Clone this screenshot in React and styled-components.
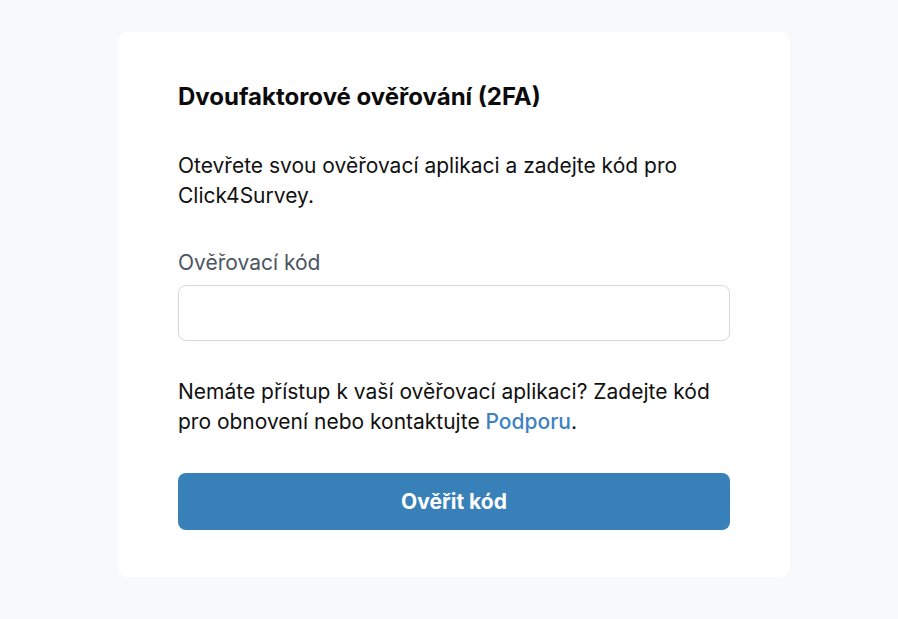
import React from "react";
import styled, { createGlobalStyle } from "styled-components";

const Global = createGlobalStyle`
  html, body { margin: 0; padding: 0; background: #f8f9fb; }
  body { font-family: Inter, "Noto Sans", sans-serif; color: #111; }
  * { box-sizing: border-box; }
`;

const Page = styled.div`
  min-height: 619px;
  display: flex;
  justify-content: center;
  align-items: flex-start;
  padding: 32px 0 0 10px;
`;

const Card = styled.div`
  width: 672px;
  background: #fff;
  border-radius: 10px;
  padding: 50px 60px 47px;
  display: flex;
  flex-direction: column;
`;

const Title = styled.h1`
  margin: 0;
  font-size: 24px;
  line-height: 30px;
  font-weight: 700;
  color: #0b0b0b;
`;

const Text = styled.p`
  margin: ${(p) => p.$mt || 0}px 0 0;
  font-size: 21px;
  line-height: 30px;
  color: #111;
`;

const Link = styled.a`
  color: #3d82c0;
  text-decoration: none;
  font-weight: 500;
`;

const Label = styled.label`
  display: block;
  margin-top: 37px;
  font-size: 21px;
  line-height: 30px;
  color: #4b5563;
`;

const Input = styled.input`
  margin-top: 7px;
  width: 100%;
  height: 56px;
  border: 1px solid #d5d8de;
  border-radius: 8px;
  font-size: 18px;
  padding: 0 16px;
  outline: none;
`;

const Button = styled.button`
  margin-top: 36px;
  width: 100%;
  height: 57px;
  border: none;
  border-radius: 8px;
  background: #3780b8;
  color: #fff;
  font-family: Inter, sans-serif;
  font-size: 21px;
  font-weight: 700;
  cursor: pointer;
`;

export default function App() {
  return (
    <>
      <Global />
      <Page>
        <Card>
          <Title>Dvoufaktorové ověřování (2FA)</Title>
          <Text $mt={39}>
            Otevřete svou ověřovací aplikaci a zadejte kód pro Click4Survey.
          </Text>
          <Label htmlFor="code">Ověřovací kód</Label>
          <Input id="code" type="text" />
          <Text $mt={36}>
            Nemáte přístup k vaší ověřovací aplikaci? Zadejte kód pro obnovení
            nebo kontaktujte <Link href="#">Podporu</Link>.
          </Text>
          <Button>Ověřit kód</Button>
        </Card>
      </Page>
    </>
  );
}
